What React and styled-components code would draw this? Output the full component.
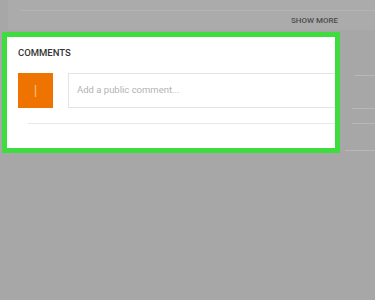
import React from 'react'
import styled, { createGlobalStyle } from 'styled-components'

const GlobalStyle = createGlobalStyle`
    body {
        margin: 0;
        font-family: Roboto, "Liberation Sans", sans-serif;
    }
`

function App() {
    return (
        <>
            <GlobalStyle />
            <Page>
                <TopCard>
                    <Divider />
                    <ShowMore>SHOW MORE</ShowMore>
                </TopCard>
                <CommentsRow>
                    <Highlight>
                        <Heading>COMMENTS</Heading>
                        <Composer>
                            <Avatar>I</Avatar>
                            <CommentInput placeholder="Add a public comment..." readOnly />
                        </Composer>
                        <Rule />
                    </Highlight>
                    <Dimmed>
                        <DimLine $gap={43} $indent={15} />
                        <DimLine $gap={32} $indent={12} />
                        <DimLine $gap={14} $indent={12} />
                        <DimLine $gap={26} $indent={5} />
                    </Dimmed>
                </CommentsRow>
            </Page>
        </>
    )
}

export default App

const Page = styled.div`
    width: 375px;
    height: 300px;
    background: #a8a7a8;
    overflow: hidden;
`

const TopCard = styled.div`
    margin-left: 8px;
    height: 30px;
    padding-top: 10px;
    box-sizing: border-box;
    background: #acabac;
    display: flex;
    flex-direction: column;
`

const Divider = styled.div`
    margin-left: 12px;
    height: 1px;
    background: #b4b4b4;
`

const ShowMore = styled.div`
    align-self: flex-end;
    margin: 5px 37px 0 0;
    font-size: 8px;
    font-weight: 500;
    line-height: 10px;
    color: #4c4c4c;
`

const CommentsRow = styled.div`
    display: flex;
    margin-top: 2px;
`

const Highlight = styled.div`
    margin-left: 2px;
    width: 338px;
    height: 121px;
    box-sizing: border-box;
    border: 5px solid #3fdc3f;
    background: #ffffff;
    padding: 10px 0 0 11px;
    display: flex;
    flex-direction: column;
`

const Heading = styled.div`
    font-size: 9.5px;
    font-weight: 500;
    line-height: 11px;
    color: #333333;
`

const Composer = styled.div`
    display: flex;
    gap: 15px;
    margin-top: 15px;
`

const Avatar = styled.div`
    width: 35px;
    height: 35px;
    flex-shrink: 0;
    background: #ef7300;
    color: #f8c68c;
    display: flex;
    align-items: center;
    justify-content: center;
    font-size: 17px;
    font-weight: 300;
`

const CommentInput = styled.input`
    flex: 1;
    min-width: 0;
    height: 35px;
    box-sizing: border-box;
    border: 1px solid #e4e4e4;
    border-right: none;
    padding: 0 0 3px 8px;
    font-family: inherit;
    font-size: 9.5px;
    outline: none;

    &::placeholder {
        color: #b3b3b3;
    }
`

const Rule = styled.div`
    margin: 15px 0 0 10px;
    height: 1px;
    background: #e8e8e8;
`

const Dimmed = styled.div`
    flex: 1;
    display: flex;
    flex-direction: column;
`

const DimLine = styled.div`
    margin-top: ${p => p.$gap}px;
    margin-left: ${p => p.$indent}px;
    height: 1px;
    background: #b8b8b8;
`
